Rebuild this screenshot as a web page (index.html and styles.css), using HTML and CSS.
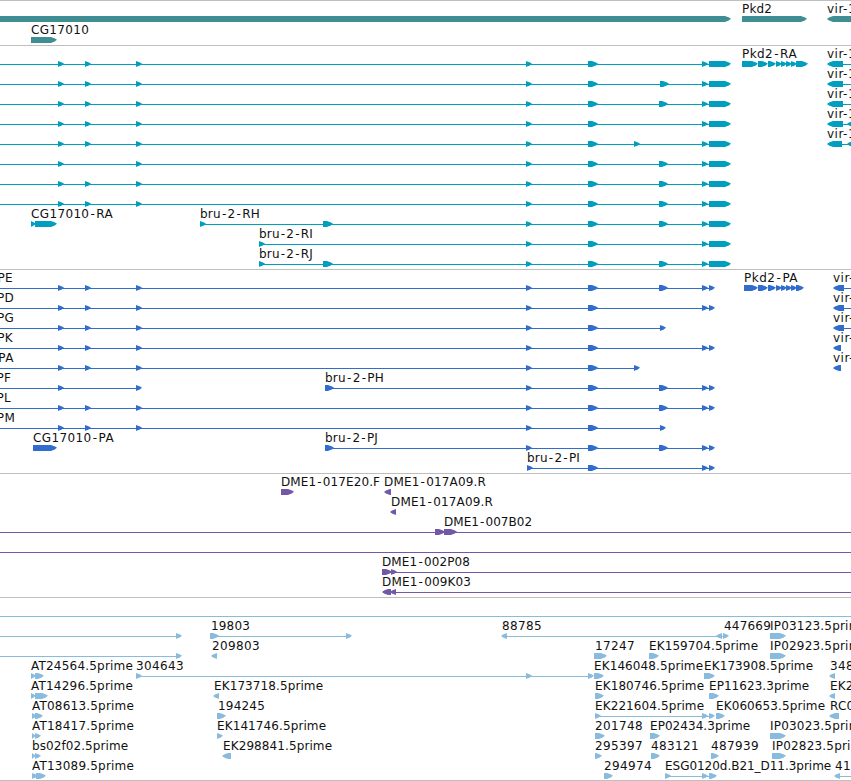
FILE: index.html
```html
<!DOCTYPE html>
<html lang="en">
<head>
    <meta charset="UTF-8">
    <meta name="viewport" content="width=device-width, initial-scale=1.0">
    <title>Genome Browser</title>
    <link rel="stylesheet" href="styles.css">
</head>
<body>
    <div class="browser">
        <section class="track genes" id="genes"></section>
        <section class="track transcripts" id="transcripts"></section>
        <section class="track proteins" id="proteins"></section>
        <section class="track bacs" id="bacs"></section>
        <section class="track ests" id="ests"></section>
    </div>
    <script src="tracks.js"></script>
</body>
</html>
```
FILE: styles.css
```css
body {
    margin: 0;
    background: #fff;
    overflow: hidden;
}
.browser {
    width: 851px;
    height: 780px;
    border-bottom: 1px solid #bebebe;
}
.track {
    display: flex;
    flex-direction: column;
    border-top: 1px solid #bebebe;
    padding: 2px 0 1px;
}
.genes {
    gap: 1px;
    color: #3f8e94;
}
.transcripts {
    color: #009ebf;
}
.proteins {
    color: #306dcd;
}
.bacs {
    color: #7458a8;
}
.ests {
    color: #88bbdd;
    padding-bottom: 0;
}
.row {
    display: block;
    width: 851px;
    height: 20px;
}
.row .feature {
    fill: currentColor;
}
.row .label {
    fill: #111;
    font-family: "DejaVu Sans", sans-serif;
    font-size: 12px;
}
```
FILE: tracks.js
```javascript
const SVG = 'http://www.w3.org/2000/svg';

// exons shared by most of the bru-2 isoforms
const A = [58, 64], B = [85, 91], C = [136, 142], D = [526, 532], E = [588, 598];
const F = [659, 668], F2 = [660, 669], G = [702, 708], H = [709, 731], P = [709, 715];
const PKD = [[758, 768], [768, 776], [776, 782], [781, 787], [786, 792], [791, 797]];

// exon: [start, end, strand], label: [start, end, text], line: [start, end]
const tracks = {
    genes: [
        { exons: [[-9, 731], [742, 807], [827, 870, -1]], labels: [[742, 772, 'Pkd2'], [827, 856, 'vir-1']] },
        { exons: [[31, 57]], labels: [[31, 89, 'CG17010']] }
    ],
    transcripts: [
        { lines: [[0, 728], [832, 851]], exons: [A, B, C, D, E, G, H, [742, 758], ...PKD, [796, 808], [827, 843, -1]], labels: [[742, 797, 'Pkd2-RA'], [827, 856, 'vir-1']] },
        { lines: [[0, 728], [832, 851]], exons: [A, B, C, D, E, F2, G, H, [827, 843, -1]], labels: [[827, 856, 'vir-1']] },
        { lines: [[0, 728], [832, 851]], exons: [A, B, C, D, E, F, G, H, [827, 843, -1]], labels: [[827, 856, 'vir-1']] },
        { lines: [[0, 728], [832, 851]], exons: [A, B, C, D, E, G, H, [827, 843, -1], [847, 860, -1]], labels: [[827, 856, 'vir-1']] },
        { lines: [[0, 728], [832, 851]], exons: [A, B, C, D, E, [634, 640], G, H, [827, 842, -1], [847, 860, -1]], labels: [[827, 856, 'vir-1']] },
        { lines: [[0, 728]], exons: [A, C, D, E, F, G, H] },
        { lines: [[0, 728]], exons: [A, B, C, D, E, F, G, H] },
        { lines: [[0, 728]], exons: [A, B, C, D, E, F, G, H] },
        { lines: [[200, 728]], exons: [[31, 36], [35, 57], [200, 206], [323, 333], D, E, F, G, H], labels: [[31, 113, 'CG17010-RA'], [200, 260, 'bru-2-RH']] },
        { lines: [[259, 728]], exons: [[259, 265], D, E, G, H], labels: [[259, 313, 'bru-2-RI']] },
        { lines: [[259, 728]], exons: [[259, 265], [323, 333], D, E, F, G, H], labels: [[259, 313, 'bru-2-RJ']] }
    ],
    proteins: [
        { lines: [[0, 712], [837, 851]], exons: [A, B, C, D, E, F, G, P, [744, 758], ...PKD, [796, 804], [833, 844, -1]], labels: [[-46, 13, 'bru-2-PE'], [744, 798, 'Pkd2-PA'], [833, 862, 'vir-1']] },
        { lines: [[0, 712], [837, 851]], exons: [A, B, C, D, E, G, P, [833, 844, -1]], labels: [[-46, 14, 'bru-2-PD'], [833, 862, 'vir-1']] },
        { lines: [[0, 663], [837, 851]], exons: [A, B, C, D, E, [660, 666], [833, 844, -1]], labels: [[-46, 14, 'bru-2-PG'], [833, 862, 'vir-1']] },
        { lines: [[0, 712]], exons: [A, B, C, D, E, G, P, [833, 841, -1]], labels: [[-46, 13, 'bru-2-PK'], [833, 862, 'vir-1']] },
        { lines: [[0, 637]], exons: [A, B, C, D, E, [634, 640], [833, 841, -1]], labels: [[-46, 14, 'bru-2-PA'], [833, 862, 'vir-1']] },
        { lines: [[0, 139], [325, 712]], exons: [A, C, [325, 334], D, E, F, G, P], labels: [[-46, 11, 'bru-2-PF'], [325, 384, 'bru-2-PH']] },
        { lines: [[0, 712]], exons: [A, B, C, D, E, F, G, P], labels: [[-46, 11, 'bru-2-PL']] },
        { lines: [[0, 663]], exons: [A, B, C, D, E, [660, 666]], labels: [[-46, 15, 'bru-2-PM']] },
        { lines: [[325, 712]], exons: [[33, 57], [325, 334], D, E, F, G, P], labels: [[33, 114, 'CG17010-PA'], [325, 378, 'bru-2-PJ']] },
        { lines: [[527, 712]], exons: [[527, 533], E, G, P], labels: [[527, 580, 'bru-2-PI']] }
    ],
    bacs: [
        { exons: [[281, 294], [384, 391, -1]], labels: [[281, 380, 'DME1-017E20.F'], [384, 486, 'DME1-017A09.R']] },
        { exons: [[390, 396, -1]], labels: [[391, 493, 'DME1-017A09.R']] },
        { lines: [[0, 851]], exons: [[435, 445], [444, 457]], labels: [[444, 532, 'DME1-007B02']] },
        { lines: [[0, 851]] },
        { lines: [[382, 851]], exons: [[382, 392], [391, 397]], labels: [[382, 470, 'DME1-002P08']] },
        { lines: [[386, 851]], exons: [[382, 391, -1], [390, 396, -1]], labels: [[382, 471, 'DME1-009K03']] }
    ],
    ests: [
        { lines: [[0, 851]] },
        { lines: [[0, 179], [211, 349], [504, 725]], exons: [[176, 182], [210, 219], [346, 352], [501, 507, -1], [716, 722, -1], [723, 729], [770, 786]], labels: [[211, 250, '19803'], [502, 542, '88785'], [724, 771, '447669'], [770, 868, 'IP03123.5prime']] },
        { lines: [[0, 179]], exons: [[176, 182], [211, 217, -1], [594, 607], [649, 659], [770, 786]], labels: [[212, 260, '209803'], [595, 635, '17247'], [649, 758, 'EK159704.5prime'], [770, 868, 'IP02923.5prime']] },
        { lines: [[136, 591]], exons: [[31, 36], [35, 44], [136, 142], [526, 532], [588, 594], [594, 604], [704, 715], [829, 835, -1]], labels: [[31, 133, 'AT24564.5prime'], [136, 184, '304643'], [594, 703, 'EK146048.5prime'], [704, 813, 'EK173908.5prime'], [830, 878, '348211']] },
        { exons: [[31, 36], [35, 48], [213, 219, -1], [595, 604], [709, 719], [829, 835, -1]], labels: [[31, 133, 'AT14296.5prime'], [214, 323, 'EK173718.5prime'], [595, 704, 'EK180746.5prime'], [709, 809, 'EP11623.3prime'], [830, 939, 'EK213960.5prime']] },
        { lines: [[595, 712]], exons: [[32, 37], [35, 43], [217, 226], [595, 601], [702, 708], [709, 715], [716, 725], [829, 839, -1]], labels: [[32, 134, 'AT08613.5prime'], [218, 265, '194245'], [595, 704, 'EK221604.5prime'], [716, 825, 'EK060653.5prime'], [830, 934, 'RC01180.5prime']] },
        { exons: [[32, 36], [35, 41], [217, 223], [595, 605], [650, 660], [770, 786]], labels: [[32, 134, 'AT18417.5prime'], [217, 326, 'EK141746.5prime'], [595, 643, '201748'], [650, 750, 'EP02434.3prime'], [770, 868, 'IP03023.5prime']] },
        { exons: [[32, 36], [35, 41], [222, 231, -1], [595, 602], [651, 660], [711, 719], [772, 786]], labels: [[32, 128, 'bs02f02.5prime'], [223, 332, 'EK298841.5prime'], [595, 643, '295397'], [651, 699, '483121'], [711, 759, '487939'], [772, 870, 'IP02823.5prime']] },
        { lines: [[665, 714], [838, 851]], exons: [[32, 38], [36, 46], [604, 613], [665, 671], [702, 708], [709, 717], [834, 840, -1]], labels: [[32, 134, 'AT13089.5prime'], [604, 652, '294974'], [665, 831, 'ESG0120d.B21_D11.3prime'], [835, 883, '412277']] }
    ]
};

function add(parent, tag, attrs) {
    const el = document.createElementNS(SVG, tag);
    for (const key in attrs) {
        el.setAttribute(key, attrs[key]);
    }
    parent.appendChild(el);
    return el;
}

// Block with a pointed end in the direction of the strand
function arrow(start, end, strand) {
    const head = Math.min(6, end - start);
    if (strand === -1) {
        return `${end},13 ${start + head},13 ${start + 2},14.6 ${start},16 ${start + 2},17.4 ${start + head},19 ${end},19`;
    }
    return `${start},13 ${end - head},13 ${end - 2},14.6 ${end},15.8 ${end - 2},17.2 ${end - head},19 ${start},19`;
}

// Fit the name into its width, most of the extra space goes round the hyphens
function drawLabel(svg, [start, end, name]) {
    const text = add(svg, 'text', { class: 'label', x: start, y: 10 });
    text.textContent = name;
    const hyphens = name.split('-').length - 1;
    const extra = end - start - text.getComputedTextLength();
    const hyphenGap = name === 'vir-1' ? 0 : 1.1;
    const spacing = (extra - hyphens * hyphenGap * 2) / name.length;
    const dx = [...name].map((char, i) => {
        const gap = char === '-' || name[i - 1] === '-' ? hyphenGap : 0;
        return i === 0 ? 0 : (spacing + gap).toFixed(2);
    });
    text.setAttribute('dx', dx.join(' '));
}

function drawRow(track, row) {
    const svg = add(track, 'svg', { class: 'row', viewBox: '0 0 851 20' });
    (row.lines || []).forEach(([start, end]) => {
        add(svg, 'rect', { class: 'feature', x: start, y: 16, width: end - start, height: 1 });
    });
    (row.exons || []).forEach(([start, end, strand]) => {
        add(svg, 'polygon', { class: 'feature', points: arrow(start, end, strand) });
    });
    (row.labels || []).forEach(label => drawLabel(svg, label));
}

for (const id in tracks) {
    const track = document.getElementById(id);
    tracks[id].forEach(row => drawRow(track, row));
}
```
